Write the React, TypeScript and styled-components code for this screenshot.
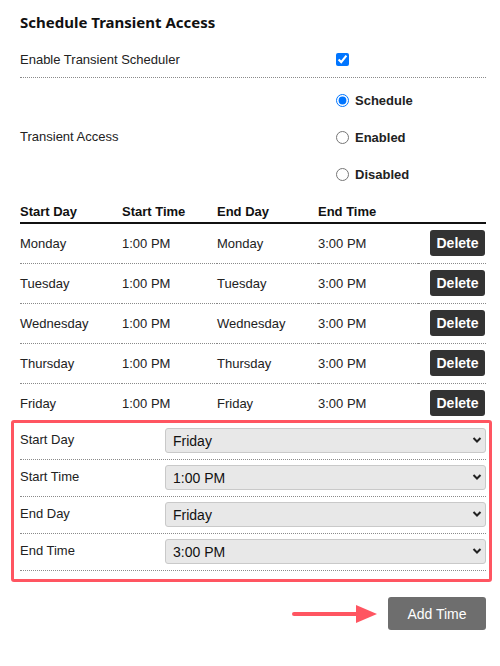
import React from "react";
import styled, { createGlobalStyle } from "styled-components";

const Global = createGlobalStyle`
  html, body { margin: 0; padding: 0; background: #fff; }
  body { font-family: "Liberation Sans", Arial, sans-serif; color: #222; }
  * { box-sizing: border-box; }
`;

const Page = styled.div`
  width: 500px;
  padding: 12px 14px 20px 20px;
`;

const Title = styled.h2`
  margin: 0 0 10px;
  font-family: "Noto Sans", "Open Sans", sans-serif;
  font-weight: 700;
  font-size: 15px;
  line-height: 20px;
  color: #111;
`;

const FieldRow = styled.div<{ $dotted?: boolean }>`
  display: grid;
  grid-template-columns: 316px 1fr;
  align-items: center;
  font-size: 13px;
  border-bottom: ${(p) => (p.$dotted ? "1px dotted #8a8a8a" : "none")};
`;

const CheckCell = styled.div`
  height: 35px;
  display: flex;
  align-items: center;
`;

const Check = styled.input`
  margin: 0;
  width: 13px;
  height: 13px;
  accent-color: #0075ff;
`;

const RadioGroup = styled.div`
  display: flex;
  flex-direction: column;
  padding: 4px 0 2px;
`;

const RadioLabel = styled.label`
  height: 37px;
  display: flex;
  align-items: center;
  gap: 6px;
  font-weight: 700;
  font-size: 13px;
  color: #222;
`;

const Radio = styled.input`
  margin: 0;
  width: 13px;
  height: 13px;
  accent-color: #0075ff;
`;

const Table = styled.table`
  width: 466px;
  border-collapse: collapse;
  font-size: 13px;
  margin-top: 6px;
`;

const Th = styled.th<{ $w?: number }>`
  text-align: left;
  font-weight: 700;
  height: 22px;
  padding: 0;
  width: ${(p) => (p.$w ? `${p.$w}px` : "auto")};
  border-bottom: 2px solid #111;
  vertical-align: middle;
  color: #111;
`;

const Tr = styled.tr<{ $last?: boolean }>`
  border-bottom: ${(p) => (p.$last ? "none" : "1px dotted #8a8a8a")};
`;

const Td = styled.td<{ $right?: boolean }>`
  height: 40px;
  padding: 0;
  vertical-align: middle;
  text-align: ${(p) => (p.$right ? "right" : "left")};
  color: #222;
`;

const DeleteButton = styled.button`
  width: 55px;
  height: 26px;
  margin-right: 1px;
  border: none;
  border-radius: 3px;
  background: #333;
  color: #fff;
  font-family: "Liberation Sans", Arial, sans-serif;
  font-weight: 700;
  font-size: 14px;
  padding: 0;
  cursor: pointer;
`;

const FormBox = styled.div`
  margin: -3px -6px 0 -9px;
  border: 3px solid #ff5561;
  border-radius: 3px;
  padding: 0 3px 8px 6px;
`;

const FormRow = styled.div`
  display: grid;
  grid-template-columns: 145px 1fr;
  align-items: start;
  padding: 5px 0 6px;
  border-bottom: 1px dotted #8a8a8a;
  font-size: 13px;
`;

const FormLabel = styled.label`
  padding-top: 4px;
  color: #222;
`;

const SelectWrap = styled.div`
  position: relative;
  height: 25px;
`;

const Select = styled.select`
  appearance: none;
  width: 100%;
  height: 25px;
  padding: 0 24px 0 7px;
  background: #e8e8e8;
  border: 1px solid #c9c9c9;
  border-radius: 3px;
  font-family: "Liberation Sans", Arial, sans-serif;
  font-size: 14px;
  color: #111;
`;

const Chevron = styled.svg`
  position: absolute;
  right: 4px;
  top: 8px;
  pointer-events: none;
`;

const Footer = styled.div`
  display: flex;
  justify-content: flex-end;
  align-items: center;
  gap: 10px;
  margin-top: 15px;
`;

const AddButton = styled.button`
  width: 98px;
  height: 33px;
  border: none;
  border-radius: 3px;
  background: #6e6e6e;
  color: #fff;
  font-family: "Liberation Sans", Arial, sans-serif;
  font-size: 14px;
  padding: 0;
`;

const rows = ["Monday", "Tuesday", "Wednesday", "Thursday", "Friday"];

const fields: [string, string][] = [
  ["Start Day", "Friday"],
  ["Start Time", "1:00 PM"],
  ["End Day", "Friday"],
  ["End Time", "3:00 PM"],
];

function FieldSelect({ value }: { value: string }) {
  return (
    <SelectWrap>
      <Select defaultValue={value}>
        <option>{value}</option>
      </Select>
      <Chevron width="10" height="8" viewBox="0 0 10 8">
        <path d="M1.5 2 L5 5.5 L8.5 2" fill="none" stroke="#222" strokeWidth="2" />
      </Chevron>
    </SelectWrap>
  );
}

export default function App() {
  return (
    <>
      <Global />
      <Page>
        <Title>Schedule Transient Access</Title>
        <FieldRow $dotted>
          <span>Enable Transient Scheduler</span>
          <CheckCell>
            <Check type="checkbox" defaultChecked />
          </CheckCell>
        </FieldRow>
        <FieldRow>
          <span>Transient Access</span>
          <RadioGroup>
            <RadioLabel>
              <Radio type="radio" name="ta" defaultChecked />
              Schedule
            </RadioLabel>
            <RadioLabel>
              <Radio type="radio" name="ta" />
              Enabled
            </RadioLabel>
            <RadioLabel>
              <Radio type="radio" name="ta" />
              Disabled
            </RadioLabel>
          </RadioGroup>
        </FieldRow>
        <Table>
          <thead>
            <tr>
              <Th $w={102}>Start Day</Th>
              <Th $w={95}>Start Time</Th>
              <Th $w={101}>End Day</Th>
              <Th $w={100}>End Time</Th>
              <Th />
            </tr>
          </thead>
          <tbody>
            {rows.map((d, i) => (
              <Tr key={d} $last={i === rows.length - 1}>
                <Td>{d}</Td>
                <Td>1:00 PM</Td>
                <Td>{d}</Td>
                <Td>3:00 PM</Td>
                <Td $right>
                  <DeleteButton>Delete</DeleteButton>
                </Td>
              </Tr>
            ))}
          </tbody>
        </Table>
        <FormBox>
          {fields.map(([label, value]) => (
            <FormRow key={label}>
              <FormLabel>{label}</FormLabel>
              <FieldSelect value={value} />
            </FormRow>
          ))}
        </FormBox>
        <Footer>
          <svg width="86" height="20" viewBox="0 0 86 20">
            <line x1="2" y1="10" x2="66" y2="10" stroke="#ff5561" strokeWidth="4" strokeLinecap="round" />
            <polygon points="64,1 85,10 64,19" fill="#ff5561" />
          </svg>
          <AddButton>Add Time</AddButton>
        </Footer>
      </Page>
    </>
  );
}
